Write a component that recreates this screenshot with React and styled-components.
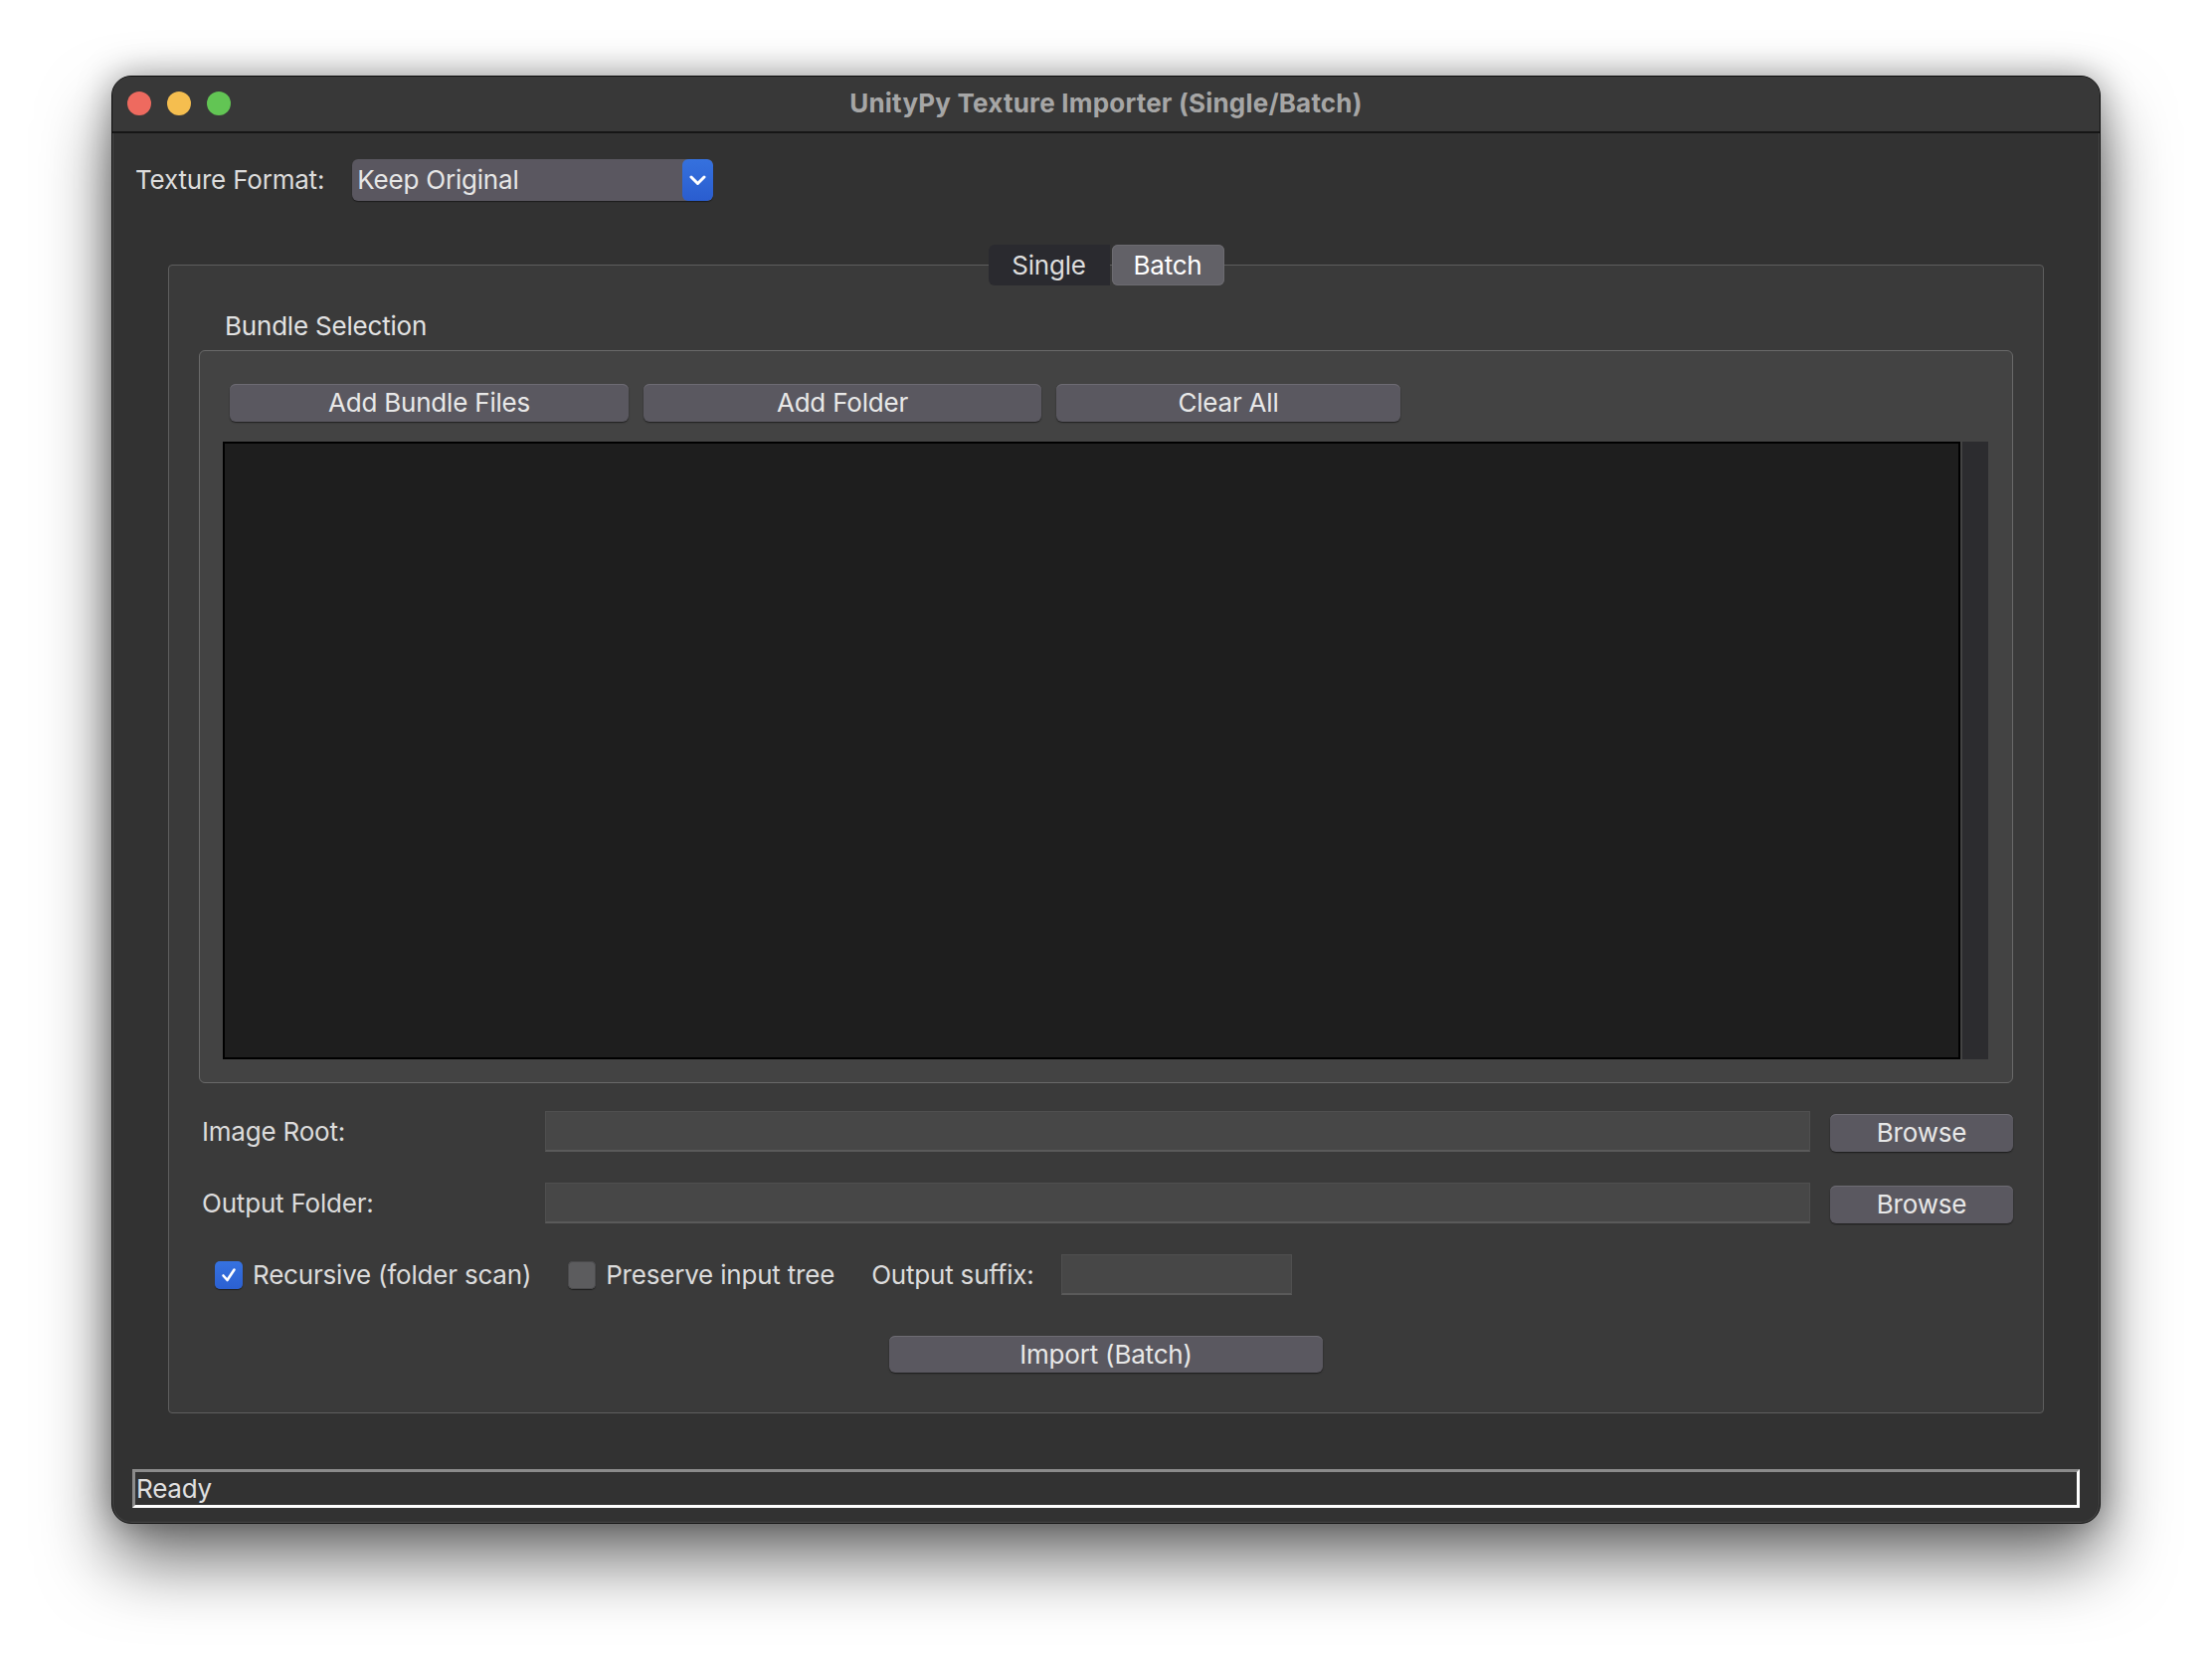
import React from "react";
import styled, { createGlobalStyle } from "styled-components";

const Global = createGlobalStyle`
  html, body { margin: 0; padding: 0; background: #ffffff; }
  body { font-family: Inter, "Noto Sans", "Liberation Sans", sans-serif; }
  * { box-sizing: border-box; }
`;

const Page = styled.div`
  width: 2224px;
  height: 1680px;
  padding: 76px 0 0 112px;
  background: #ffffff;
`;

const Window = styled.div`
  width: 2000px;
  height: 1456px;
  border-radius: 20px;
  overflow: hidden;
  background: #323232;
  border: 1px solid #0d0d0d;
  box-shadow: 0 38px 70px rgba(0, 0, 0, 0.55), 0 0 34px rgba(0, 0, 0, 0.35),
    inset 0 0 0 1px #4a4a4a;
  display: flex;
  flex-direction: column;
  font-size: 26px;
  letter-spacing: -0.2px;
  color: #dedede;
`;

const TitleBar = styled.div`
  height: 57px;
  flex: none;
  background: #383838;
  border-bottom: 2px solid #161616;
  display: grid;
  grid-template-columns: 1fr auto 1fr;
  align-items: center;
  padding: 0 15px 1px;
`;

const Lights = styled.div`
  display: flex;
  gap: 16px;
`;

const Light = styled.span`
  width: 24px;
  height: 24px;
  border-radius: 50%;
  background: ${(p) => p.$c};
`;

const Title = styled.div`
  font-weight: 700;
  font-size: 26px;
  color: #a6a6a6;
  letter-spacing: 0.2px;
  padding-bottom: 1px;
`;

const Content = styled.div`
  flex: 1;
  display: flex;
  flex-direction: column;
  padding: 26px 20px 15px;
`;

const FormatRow = styled.div`
  display: flex;
  align-items: center;
  gap: 28px;
  padding-left: 3px;
  height: 42px;
`;

const Label = styled.span`
  font-size: 26px;
  line-height: 32px;
  color: #dcdcdc;
  white-space: nowrap;
`;

const Combo = styled.div`
  width: 363px;
  height: 42px;
  display: flex;
  border-radius: 6px;
  background: #5a5760;
  box-shadow: 0 1px 1px rgba(0, 0, 0, 0.45);
  overflow: hidden;
`;

const ComboText = styled.span`
  flex: 1;
  padding-left: 5px;
  line-height: 42px;
  color: #e6e6e6;
`;

const ComboArrow = styled.span`
  width: 31px;
  flex: none;
  border-radius: 6px;
  background: linear-gradient(#3571de, #2a5dcf);
  display: flex;
  align-items: center;
  justify-content: center;
`;

const TabWidget = styled.div`
  margin: 44px 36px 0;
  display: flex;
  flex-direction: column;
`;

const TabBar = styled.div`
  display: flex;
  justify-content: center;
  margin-bottom: -21px;
  position: relative;
  z-index: 1;
`;

const Tab = styled.div`
  height: 41px;
  display: flex;
  align-items: center;
  justify-content: center;
  font-size: 26px;
  width: ${(p) => p.$w}px;
  color: ${(p) => (p.$active ? "#ffffff" : "#dedede")};
  background: ${(p) => (p.$active ? "#626167" : "#2a2a2f")};
  border-radius: ${(p) => (p.$active ? "6px" : "6px 0 0 6px")};
  margin-left: ${(p) => (p.$active ? "2px" : "0")};
  box-shadow: ${(p) => (p.$active ? "inset 0 0 0 1px #6c6b70" : "none")};
`;

const Pane = styled.div`
  height: 1155px;
  border: 1px solid #5e5e5e;
  border-radius: 4px;
  background: #3a3a3a;
  padding: 45px 30px 0;
  display: flex;
  flex-direction: column;
`;

const GroupTitle = styled.div`
  font-size: 26px;
  line-height: 32px;
  color: #e2e2e2;
  margin: 0 0 8px 26px;
`;

const Group = styled.div`
  height: 737px;
  border: 1px solid #696969;
  border-radius: 6px;
  background: #434343;
  padding: 33px 24px 23px 23px;
  display: flex;
  flex-direction: column;
  gap: 20px;
`;

const ButtonRow = styled.div`
  display: flex;
  gap: 15px;
  padding-left: 7px;
`;

const Button = styled.div`
  width: ${(p) => p.$w}px;
  height: ${(p) => p.$h || 38}px;
  flex: none;
  border-radius: 6px;
  background: #5a5860;
  box-shadow: inset 0 1px 0 #6e6c73, 0 1px 1.5px rgba(0, 0, 0, 0.55);
  display: flex;
  align-items: center;
  justify-content: center;
  font-size: 26px;
  color: #e8e8e8;
  padding-bottom: 1px;
`;

const ListRow = styled.div`
  height: 621px;
  display: flex;
  gap: 2px;
`;

const List = styled.div`
  flex: 1;
  border: 2px solid #000000;
  background: #1e1e1e;
`;

const ScrollStrip = styled.div`
  width: 26px;
  background: #2c2c2f;
`;

const FieldRow = styled.div`
  height: 41px;
  display: flex;
  align-items: center;
  margin-top: ${(p) => p.$mt}px;
`;

const FieldLabel = styled(Label)`
  width: 348px;
  flex: none;
  padding-left: 3px;
`;

const Input = styled.div`
  height: 41px;
  width: ${(p) => (p.$w ? `${p.$w}px` : "auto")};
  flex: ${(p) => (p.$w ? "none" : "1")};
  background: #474747;
  border: 1px solid #4f4f4f;
  border-bottom: 2px solid #5a5a5a;
`;

const BrowseWrap = styled.div`
  margin-left: 20px;
  padding-top: 3px;
`;

const OptionsRow = styled.div`
  height: 41px;
  display: flex;
  align-items: center;
  margin-top: 31px;
  padding-left: 16px;
`;

const Check = styled.label`
  display: flex;
  align-items: center;
  gap: 10px;
  margin-right: 37px;
`;

const Box = styled.span`
  width: 28px;
  height: 28px;
  border-radius: 5px;
  display: flex;
  align-items: center;
  justify-content: center;
  background: ${(p) => (p.$on ? "linear-gradient(#3672e0, #2b60d2)" : "#5c5c5e")};
  box-shadow: ${(p) =>
    p.$on ? "0 1px 1px rgba(0,0,0,0.5)" : "inset 0 0 0 1px #4a4a4c, 0 1px 1px rgba(0,0,0,0.5)"};
`;

const SuffixLabel = styled(Label)`
  margin-right: 27px;
`;

const ImportRow = styled.div`
  display: flex;
  justify-content: center;
  margin-top: 41px;
`;

const StatusBar = styled.div`
  margin-top: 56px;
  height: 39px;
  border-top: 3px solid #8b8b8b;
  border-left: 3px solid #8b8b8b;
  border-bottom: 3px solid #ffffff;
  border-right: 3px solid #ffffff;
  padding-left: 1px;
  display: flex;
  align-items: center;
  font-size: 26px;
  color: #e0e0e0;
  background: #323232;
`;

export default function App() {
  return (
    <Page>
      <Global />
      <Window>
        <TitleBar>
          <Lights>
            <Light $c="#ee6a5f" />
            <Light $c="#f5be4f" />
            <Light $c="#62c554" />
          </Lights>
          <Title>UnityPy Texture Importer (Single/Batch)</Title>
          <span />
        </TitleBar>
        <Content>
          <FormatRow>
            <Label>Texture Format:</Label>
            <Combo>
              <ComboText>Keep Original</ComboText>
              <ComboArrow>
                <svg width="17" height="11" viewBox="0 0 17 11">
                  <polyline
                    points="2,2 8.5,8.5 15,2"
                    fill="none"
                    stroke="#ffffff"
                    strokeWidth="3"
                    strokeLinecap="round"
                    strokeLinejoin="round"
                  />
                </svg>
              </ComboArrow>
            </Combo>
          </FormatRow>

          <TabWidget>
            <TabBar>
              <Tab $w={122}>Single</Tab>
              <Tab $w={113} $active>
                Batch
              </Tab>
            </TabBar>
            <Pane>
              <GroupTitle>Bundle Selection</GroupTitle>
              <Group>
                <ButtonRow>
                  <Button $w={401}>Add Bundle Files</Button>
                  <Button $w={400}>Add Folder</Button>
                  <Button $w={346}>Clear All</Button>
                </ButtonRow>
                <ListRow>
                  <List />
                  <ScrollStrip />
                </ListRow>
              </Group>

              <FieldRow $mt={28}>
                <FieldLabel>Image Root:</FieldLabel>
                <Input />
                <BrowseWrap>
                  <Button $w={184}>Browse</Button>
                </BrowseWrap>
              </FieldRow>
              <FieldRow $mt={31}>
                <FieldLabel>Output Folder:</FieldLabel>
                <Input />
                <BrowseWrap>
                  <Button $w={184}>Browse</Button>
                </BrowseWrap>
              </FieldRow>

              <OptionsRow>
                <Check>
                  <Box $on>
                    <svg width="18" height="18" viewBox="0 0 18 18">
                      <polyline
                        points="3.5,9.5 7.5,14 14.5,3.5"
                        fill="none"
                        stroke="#ffffff"
                        strokeWidth="2.6"
                        strokeLinecap="round"
                        strokeLinejoin="round"
                      />
                    </svg>
                  </Box>
                  <Label>Recursive (folder scan)</Label>
                </Check>
                <Check>
                  <Box />
                  <Label>Preserve input tree</Label>
                </Check>
                <SuffixLabel>Output suffix:</SuffixLabel>
                <Input $w={232} />
              </OptionsRow>

              <ImportRow>
                <Button $w={436} $h={37}>
                  Import (Batch)
                </Button>
              </ImportRow>
            </Pane>
          </TabWidget>

          <StatusBar>Ready</StatusBar>
        </Content>
      </Window>
    </Page>
  );
}
